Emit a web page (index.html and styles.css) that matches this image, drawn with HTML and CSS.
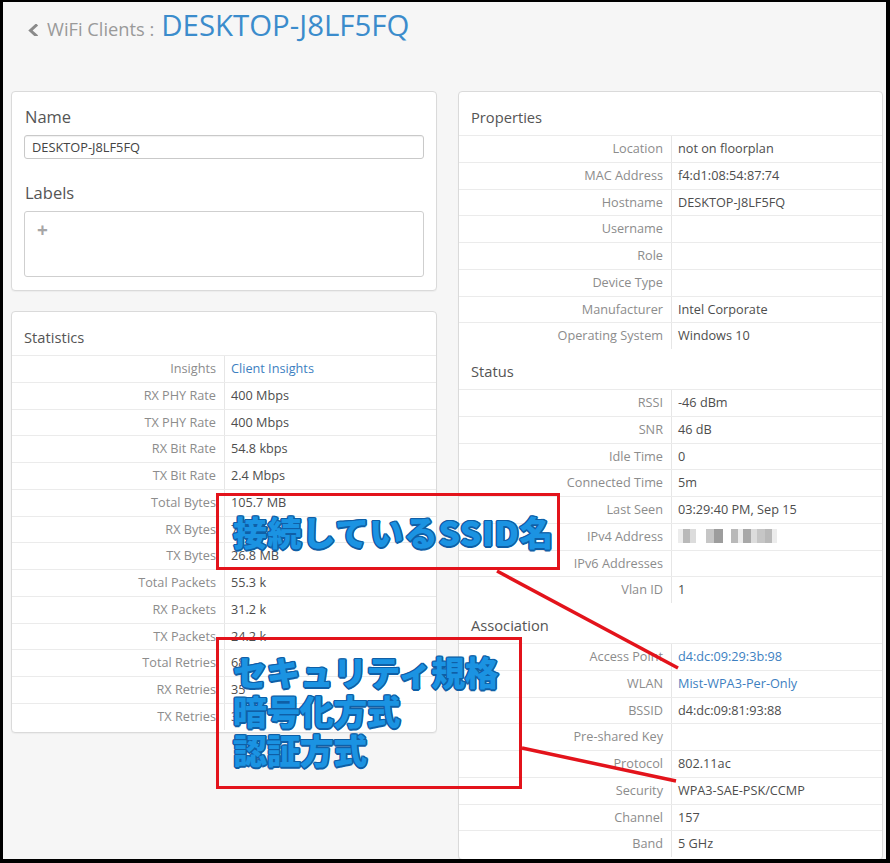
FILE: index.html
```html
<!DOCTYPE html>
<html lang="ja">
<head>
<meta charset="utf-8">
<title>WiFi Clients : DESKTOP-J8LF5FQ</title>
<link rel="stylesheet" href="styles.css">
</head>
<body>
<div class="frame">
  <header class="page-head">
    <svg class="back" width="10" height="12" viewBox="0 0 10 12"><polyline points="8,1.5 2.5,6.5 8,11.5" fill="none" stroke="#8a8a8a" stroke-width="3" stroke-linecap="square"/></svg>
    <span class="crumb">WiFi Clients :</span>
    <h1 class="client-name">DESKTOP-J8LF5FQ</h1>
  </header>

  <main class="columns">
    <div class="col">
      <section class="card edit-card">
        <div class="field-label">Name</div>
        <div class="text-input">DESKTOP-J8LF5FQ</div>
        <div class="field-label labels-title">Labels</div>
        <div class="labels-box"><span class="plus">+</span></div>
      </section>

      <section class="card table-card">
        <div class="sec-title">Statistics</div>
        <div class="row"><div class="k">Insights</div><div class="v link">Client Insights</div></div>
        <div class="row"><div class="k">RX PHY Rate</div><div class="v">400 Mbps</div></div>
        <div class="row"><div class="k">TX PHY Rate</div><div class="v">400 Mbps</div></div>
        <div class="row"><div class="k">RX Bit Rate</div><div class="v">54.8 kbps</div></div>
        <div class="row"><div class="k">TX Bit Rate</div><div class="v">2.4 Mbps</div></div>
        <div class="row"><div class="k">Total Bytes</div><div class="v">105.7 MB</div></div>
        <div class="row"><div class="k">RX Bytes</div><div class="v">78.9 MB</div></div>
        <div class="row"><div class="k">TX Bytes</div><div class="v">26.8 MB</div></div>
        <div class="row"><div class="k">Total Packets</div><div class="v">55.3 k</div></div>
        <div class="row"><div class="k">RX Packets</div><div class="v">31.2 k</div></div>
        <div class="row"><div class="k">TX Packets</div><div class="v">24.2 k</div></div>
        <div class="row"><div class="k">Total Retries</div><div class="v">68</div></div>
        <div class="row"><div class="k">RX Retries</div><div class="v">35</div></div>
        <div class="row"><div class="k">TX Retries</div><div class="v">33</div></div>
      </section>
    </div>

    <div class="col">
      <section class="card table-card">
        <div class="sec-title">Properties</div>
        <div class="row"><div class="k">Location</div><div class="v">not on floorplan</div></div>
        <div class="row"><div class="k">MAC Address</div><div class="v">f4:d1:08:54:87:74</div></div>
        <div class="row"><div class="k">Hostname</div><div class="v">DESKTOP-J8LF5FQ</div></div>
        <div class="row"><div class="k">Username</div><div class="v"></div></div>
        <div class="row"><div class="k">Role</div><div class="v"></div></div>
        <div class="row"><div class="k">Device Type</div><div class="v"></div></div>
        <div class="row"><div class="k">Manufacturer</div><div class="v">Intel Corporate</div></div>
        <div class="row"><div class="k">Operating System</div><div class="v">Windows 10</div></div>

        <div class="sec-title">Status</div>
        <div class="row"><div class="k">RSSI</div><div class="v">-46 dBm</div></div>
        <div class="row"><div class="k">SNR</div><div class="v">46 dB</div></div>
        <div class="row"><div class="k">Idle Time</div><div class="v">0</div></div>
        <div class="row"><div class="k">Connected Time</div><div class="v">5m</div></div>
        <div class="row"><div class="k">Last Seen</div><div class="v">03:29:40 PM, Sep 15</div></div>
        <div class="row"><div class="k">IPv4 Address</div><div class="v"><span class="blur"><i class="a"></i><i class="b"></i><i class="c"></i><i class="gap"></i><i class="d"></i><i class="e"></i><i class="gap2"></i><i class="b"></i><i class="a"></i><i class="f"></i><i class="c"></i><i class="d"></i><i class="b"></i><i class="a"></i></span></div></div>
        <div class="row"><div class="k">IPv6 Addresses</div><div class="v"></div></div>
        <div class="row"><div class="k">Vlan ID</div><div class="v">1</div></div>

        <div class="sec-title">Association</div>
        <div class="row"><div class="k">Access Point</div><div class="v link">d4:dc:09:29:3b:98</div></div>
        <div class="row"><div class="k">WLAN</div><div class="v link">Mist-WPA3-Per-Only</div></div>
        <div class="row"><div class="k">BSSID</div><div class="v">d4:dc:09:81:93:88</div></div>
        <div class="row"><div class="k">Pre-shared Key</div><div class="v"></div></div>
        <div class="row"><div class="k">Protocol</div><div class="v">802.11ac</div></div>
        <div class="row"><div class="k">Security</div><div class="v">WPA3-SAE-PSK/CCMP</div></div>
        <div class="row"><div class="k">Channel</div><div class="v">157</div></div>
        <div class="row"><div class="k">Band</div><div class="v">5 GHz</div></div>
      </section>
    </div>
  </main>
</div>

<svg class="callout-lines" width="890" height="863" viewBox="0 0 890 863">
  <line x1="497" y1="571" x2="678" y2="668" stroke="#e3131b" stroke-width="3.5"/>
  <line x1="522" y1="748" x2="676" y2="781" stroke="#e3131b" stroke-width="3.5"/>
</svg>
<div class="callout callout-ssid"><span>接続しているSSID名</span></div>
<div class="callout callout-sec"><span>セキュリティ規格<br>暗号化方式<br>認証方式</span></div>
</body>
</html>
```

FILE: styles.css
```css
* { box-sizing: border-box; }

html, body {
  margin: 0;
  padding: 0;
}

body {
  position: relative;
  width: 890px;
  height: 863px;
  overflow: hidden;
  font-family: "Open Sans", "Noto Sans", "Liberation Sans", sans-serif;
  background: #000;
}

.frame {
  width: 890px;
  height: 863px;
  border-style: solid;
  border-color: #000;
  border-width: 2px 4px 4px 3px;
  background: #f6f6f6;
  overflow: hidden;
}

/* header */
.page-head {
  height: 89px;
  display: flex;
  align-items: baseline;
  padding: 6px 0 0 25px;
}

.back {
  margin-bottom: 3px;
  margin-right: 9px;
  flex: none;
}

.crumb {
  font-size: 18.3px;
  color: #9a9a9a;
  margin-right: 7px;
  line-height: 34px;
}

.client-name {
  margin: 0;
  font-size: 29.4px;
  font-weight: 400;
  color: #3b8ccc;
  line-height: 34px;
}

/* columns */
.columns {
  display: grid;
  grid-template-columns: 426px 425px;
  column-gap: 21px;
  padding-left: 8px;
  align-items: start;
}

.col {
  display: flex;
  flex-direction: column;
  gap: 20px;
}

.card {
  background: #fff;
  border: 1px solid #dadada;
  border-radius: 4px;
  box-shadow: 0 1px 1px rgba(0,0,0,0.04);
}

/* name / labels card */
.edit-card {
  padding: 15px 12px 13px 12px;
}

.field-label {
  font-size: 16.5px;
  color: #555;
  line-height: 20px;
  padding-left: 1px;
}

.text-input {
  margin-top: 8px;
  height: 24px;
  border: 1px solid #c9c9c9;
  border-radius: 3px;
  box-shadow: inset 0 1px 1px rgba(0,0,0,0.06);
  font-size: 12.8px;
  color: #444;
  line-height: 22px;
  padding-left: 7px;
}

.labels-title {
  margin-top: 24px;
}

.labels-box {
  margin-top: 8px;
  height: 66px;
  border: 1px solid #cfcfcf;
  border-radius: 3px;
  padding: 7px 0 0 12px;
}

.plus {
  font-size: 19px;
  font-weight: 700;
  color: #a6a6a6;
  line-height: 22px;
}

/* tables */
.table-card {
  padding: 3px 0 2px 0;
}

.sec-title {
  height: 40px;
  line-height: 44px;
  font-size: 14.7px;
  color: #555;
  padding-left: 12px;
}

.row {
  display: grid;
  grid-template-columns: 212px 1fr;
  height: 26.75px;
  border-top: 1px solid #ebebeb;
  font-size: 12.7px;
  line-height: 25.5px;
}

.k {
  text-align: right;
  color: #8c8c8c;
  padding-right: 8px;
  white-space: nowrap;
}

.v {
  border-left: 1px solid #e6e6e6;
  color: #4d4d4d;
  padding-left: 6px;
  white-space: nowrap;
}

.v.link {
  color: #3d7fc1;
}

.blur {
  display: inline-flex;
  align-items: center;
  height: 25px;
  vertical-align: top;
}

.blur i {
  display: inline-block;
  height: 14px;
  width: 7px;
  background: #d6d6d6;
}

.blur i.a { background: #ececec; width: 5px; }
.blur i.b { background: #b9b9b9; width: 7px; }
.blur i.c { background: #dcdcdc; width: 6px; }
.blur i.d { background: #c6c6c6; width: 8px; }
.blur i.e { background: #9d9d9d; width: 9px; }
.blur i.f { background: #a8a8a8; width: 8px; }
.blur i.gap { background: transparent; width: 10px; }
.blur i.gap2 { background: transparent; width: 8px; }

/* callouts */
.callout-lines {
  position: absolute;
  left: 0;
  top: 0;
  pointer-events: none;
}

.callout {
  position: absolute;
  border: 3px solid #e3131b;
  display: flex;
  align-items: center;
  padding-left: 14px;
  font-family: "Noto Sans CJK JP", "Noto Sans", sans-serif;
  font-weight: 900;
  font-size: 34px;
  color: #1b93e2;
  text-shadow:
    1.5px 0 0 #0f5fa6, -1.5px 0 0 #0f5fa6, 0 1.5px 0 #0f5fa6, 0 -1.5px 0 #0f5fa6,
    1px 1px 0 #0f5fa6, -1px -1px 0 #0f5fa6, 1px -1px 0 #0f5fa6, -1px 1px 0 #0f5fa6;
}

.callout-ssid {
  left: 216px;
  top: 493px;
  width: 344px;
  height: 77px;
  letter-spacing: 0.4px;
}

.callout-sec {
  left: 216px;
  top: 637px;
  width: 306px;
  height: 152px;
  line-height: 39px;
  letter-spacing: -0.6px;
  padding-bottom: 6px;
}
```
